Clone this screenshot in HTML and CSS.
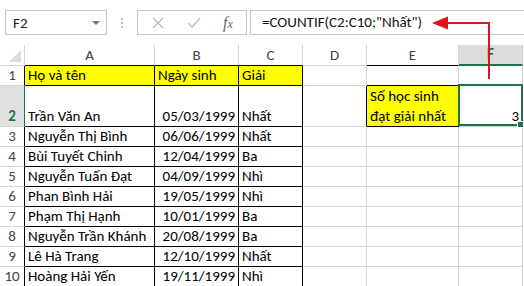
FILE: index.html
```html
<!DOCTYPE html>
<html>
<head>
  <meta charset="utf-8">
  <title>COUNTIF</title>
  <link rel="stylesheet" href="styles.css">
</head>
<body>

<div class="toolbar">
  <div class="namebox">
    <span>F2</span>
    <span class="drop"></span>
  </div>
  <div class="dots">
    <svg width="4" height="12" viewBox="0 0 4 12"><circle cx="2" cy="2" r="1" fill="#b4b4b4"/><circle cx="2" cy="6" r="1" fill="#b4b4b4"/><circle cx="2" cy="10" r="1" fill="#b4b4b4"/></svg>
  </div>
  <div class="fbtns">
    <svg class="cancel" width="12" height="12" viewBox="0 0 12 12"><path d="M1 1 L11 11 M11 1 L1 11" stroke="#b8b8b8" stroke-width="1.3" fill="none"/></svg>
    <svg class="enter" width="14" height="12" viewBox="0 0 14 12"><path d="M1 6 L5 10 L13 1" stroke="#c4c4c4" stroke-width="1.6" fill="none"/></svg>
    <span class="fx"><i>f</i><i class="sub">x</i></span>
  </div>
  <div class="formula">=COUNTIF(C2:C10;"Nhất")</div>
</div>

<div class="sheet">
  <table class="grid">
    <colgroup>
      <col class="w-rh"><col class="w-a"><col class="w-b"><col class="w-c"><col class="w-d"><col class="w-e"><col class="w-f">
    </colgroup>
    <tr class="head">
      <td class="corner"><span class="tri"></span></td>
      <td class="bk-b">A</td>
      <td class="bk-b">B</td>
      <td class="bk-b">C</td>
      <td>D</td>
      <td class="bk-b">E</td>
      <td class="sel-col">F</td>
    </tr>
    <tr>
      <td class="rh">1</td>
      <td class="yel bk">Họ và tên</td>
      <td class="yel bk">Ngày sinh</td>
      <td class="yel bk">Giải</td>
      <td></td>
      <td class="bk-b"></td>
      <td></td>
    </tr>
    <tr class="tall">
      <td class="rh sel-row">2</td>
      <td class="bk">Trần Văn An</td>
      <td class="bk num">05/03/1999</td>
      <td class="bk">Nhất</td>
      <td class="bk-r"></td>
      <td class="yel bk wrap">Số học sinh<br>đạt giải nhất</td>
      <td class="num">3</td>
    </tr>
    <tr>
      <td class="rh">3</td>
      <td class="bk">Nguyễn Thị Bình</td>
      <td class="bk num">06/06/1999</td>
      <td class="bk">Nhất</td>
      <td></td><td></td><td></td>
    </tr>
    <tr>
      <td class="rh">4</td>
      <td class="bk">Bùi Tuyết Chinh</td>
      <td class="bk num">12/04/1999</td>
      <td class="bk">Ba</td>
      <td></td><td></td><td></td>
    </tr>
    <tr>
      <td class="rh">5</td>
      <td class="bk">Nguyễn Tuấn Đạt</td>
      <td class="bk num">04/09/1999</td>
      <td class="bk">Nhì</td>
      <td></td><td></td><td></td>
    </tr>
    <tr>
      <td class="rh">6</td>
      <td class="bk">Phan Bình Hải</td>
      <td class="bk num">19/05/1999</td>
      <td class="bk">Nhì</td>
      <td></td><td></td><td></td>
    </tr>
    <tr>
      <td class="rh">7</td>
      <td class="bk">Phạm Thị Hạnh</td>
      <td class="bk num">10/01/1999</td>
      <td class="bk">Ba</td>
      <td></td><td></td><td></td>
    </tr>
    <tr>
      <td class="rh">8</td>
      <td class="bk">Nguyễn Trần Khánh</td>
      <td class="bk num">20/08/1999</td>
      <td class="bk">Ba</td>
      <td></td><td></td><td></td>
    </tr>
    <tr>
      <td class="rh">9</td>
      <td class="bk">Lê Hà Trang</td>
      <td class="bk num">12/10/1999</td>
      <td class="bk">Nhất</td>
      <td></td><td></td><td></td>
    </tr>
    <tr>
      <td class="rh">10</td>
      <td class="bk">Hoàng Hải Yến</td>
      <td class="bk num">19/11/1999</td>
      <td class="bk">Nhì</td>
      <td></td><td></td><td></td>
    </tr>
  </table>
</div>

<!-- selection box on F2 -->
<div class="selection"><span class="handle"></span></div>

<!-- red arrow pointing at the formula -->
<svg class="arrow" width="524" height="90" viewBox="0 0 524 90">
  <polyline points="489,79 489,23 446,23" fill="none" stroke="#e0131c" stroke-width="2"/>
  <polygon points="432,23 448,16.5 448,29.5" fill="#e0131c"/>
</svg>

</body>
</html>
```

FILE: styles.css
```css
body {
    margin: 0;
    background: #fff;
    font-family: "Carlito", "Calibri", "Liberation Sans", Arial, sans-serif;
    font-size: 15px;
    color: #000;
    width: 524px;
    height: 286px;
    overflow: hidden;
}

/* ---- formula bar ---- */

.toolbar {
    height: 45px;
    box-sizing: border-box;
    padding: 10px 0 0 5px;
    display: flex;
    align-items: flex-start;
}

.namebox {
    width: 102px;
    height: 25px;
    box-sizing: border-box;
    border: 1px solid #c6c6c6;
    display: flex;
    align-items: center;
    justify-content: space-between;
    padding: 0 6px 0 7px;
    color: #222;
    font-size: 15px;
}

.drop {
    width: 0;
    height: 0;
    border-left: 4px solid transparent;
    border-right: 4px solid transparent;
    border-top: 4px solid #777;
}

.dots {
    width: 30px;
    height: 25px;
    display: flex;
    align-items: center;
    justify-content: center;
}

.fbtns {
    width: 110px;
    height: 25px;
    box-sizing: border-box;
    border: 1px solid #c6c6c6;
    display: flex;
    align-items: center;
    padding-left: 14px;
}

.cancel {
    margin-right: 23px;
}

.enter {
    margin-right: 22px;
}

.fx {
    font-family: "Liberation Serif", "DejaVu Serif", serif;
    color: #666;
    font-size: 16px;
}

.fx .sub {
    font-size: 12px;
}

.formula {
    flex: 1;
    height: 25px;
    margin-left: 3px;
    box-sizing: border-box;
    border: 1px solid #c6c6c6;
    border-right: none;
    padding-left: 11px;
    line-height: 23px;
    font-size: 15px;
    color: #111;
}

/* ---- sheet ---- */

.grid {
    border-collapse: separate;
    border-spacing: 0;
    table-layout: fixed;
    width: 523px;
}

.w-rh { width: 25px; }
.w-a { width: 130px; }
.w-b { width: 84px; }
.w-c { width: 64px; }
.w-d { width: 64px; }
.w-e { width: 92px; }
.w-f { width: 64px; }

.grid td {
    height: 20px;
    box-sizing: border-box;
    padding: 0 3px;
    line-height: 19px;
    vertical-align: bottom;
    white-space: nowrap;
    overflow: hidden;
    border-right: 1px solid #d4d4d4;
    border-bottom: 1px solid #d4d4d4;
}

.grid tr.tall td {
    height: 40px;
}

.head td {
    text-align: center;
    color: #444;
    vertical-align: middle;
}

.corner {
    position: relative;
}

.tri {
    position: absolute;
    right: 3px;
    bottom: 3px;
    width: 0;
    height: 0;
    border-left: 12px solid transparent;
    border-bottom: 12px solid #dcdcdc;
}

.grid td.rh {
    text-align: center;
    color: #444;
    padding: 0;
    border-right-color: #000;
}

.grid td.sel-row {
    background: #e1e1e1;
    color: #217346;
    font-weight: bold;
    border-right-color: #217346;
}

.grid td.sel-col {
    background: #dcdcdc;
    color: #217346;
    font-weight: bold;
    border-bottom: 2px solid #217346;
}

.grid td.bk {
    border-right-color: #000;
    border-bottom-color: #000;
}

.grid td.bk-b {
    border-bottom-color: #000;
}

.grid td.bk-r {
    border-right-color: #000;
}

.yel {
    background: #ffff00;
}

.num {
    text-align: right;
}

.grid td.wrap {
    line-height: 20px;
}

/* overlays */

.selection {
    position: absolute;
    left: 458px;
    top: 84px;
    width: 65px;
    height: 42px;
    box-sizing: border-box;
    border: 2px solid #217346;
}

.handle {
    position: absolute;
    right: -3px;
    bottom: -4px;
    width: 5px;
    height: 5px;
    background: #217346;
    border: 1px solid #fff;
}

.arrow {
    position: absolute;
    left: 0;
    top: 0;
}
```
